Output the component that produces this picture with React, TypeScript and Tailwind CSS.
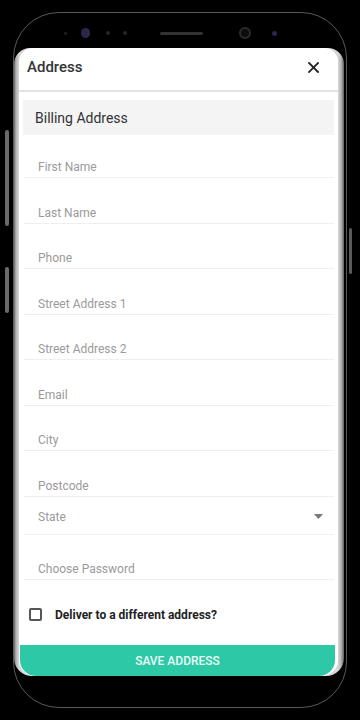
import React from "react";

const fields = [
  "Last Name",
  "Phone",
  "Street Address 1",
  "Street Address 2",
  "Email",
  "City",
  "Postcode",
];

export default function App() {
  return (
    <div
      className="relative w-[360px] h-[720px] bg-black overflow-hidden"
      style={{ fontFamily: "Roboto, 'Liberation Sans', sans-serif" }}
    >
      {/* side buttons */}
      <div className="absolute left-[5px] top-[130px] w-[4px] h-[96px] rounded-full bg-[#6a6a6a]" />
      <div className="absolute left-[5px] top-[267px] w-[4px] h-[46px] rounded-full bg-[#6a6a6a]" />
      <div className="absolute left-[349px] top-[228px] w-[3px] h-[46px] rounded-full bg-[#5a5a5a]" />

      {/* phone body */}
      <div className="ml-[13px] mt-[12px] w-[334px] h-[696px] rounded-[46px] border border-[#5a5a5a] bg-black flex flex-col">
        {/* sensors */}
        <div className="h-[35px] pt-[5px] flex items-center">
          <div className="ml-[50px] w-[3px] h-[3px] rounded-full bg-[#222]" />
          <div className="ml-[14px] w-[9px] h-[10px] rounded-full bg-[#2a2848]" />
          <div className="ml-[16px] w-[4px] h-[4px] rounded-full bg-[#262626]" />
          <div className="ml-[13px] w-[4px] h-[4px] rounded-full bg-[#262626]" />
          <div className="ml-[33px] w-[43px] h-[3px] rounded-full bg-[#333]" />
          <div className="ml-[36px] w-[12px] h-[12px] rounded-full border-2 border-[#2c2c2c] bg-[#0c0c0c]" />
          <div className="ml-[21px] w-[5px] h-[5px] rounded-full bg-[#2a2850]" />
        </div>

        {/* screen with curved glass edges */}
        <div className="h-[628px] w-[330px] rounded-t-[16px] rounded-b-[18px] bg-[linear-gradient(to_right,#6a6a6a_0px,#b0b0b0_2px,#d8d8d8_5px,#d8d8d8_calc(100%-6px),#b5b5b5_calc(100%-3px),#5e5e5e_100%)] pl-[5px] pr-[6px] flex">
          <div className="flex-1 bg-white rounded-t-[14px] rounded-b-[16px] overflow-hidden flex flex-col">
            {/* header */}
            <div className="h-[42px] flex items-center justify-between pl-[8px] pr-[19px] pb-[4px]">
              <span className="text-[15px] font-medium text-[#333] leading-none">Address</span>
              <svg width="11" height="11" viewBox="0 0 11 11">
                <path d="M1 1L10 10M10 1L1 10" stroke="#222" strokeWidth="1.8" strokeLinecap="square" />
              </svg>
            </div>
            <div className="h-[2px] bg-[#e3e3e3]" />

            {/* billing box */}
            <div className="mt-[8px] mx-[4px] h-[35px] bg-[#f4f4f4] flex items-center pl-[12px]">
              <span className="text-[14px] text-[#333] leading-none">Billing Address</span>
            </div>

            {/* fields */}
            <div className="ml-[5px] mr-[4px] flex flex-col">
              <div className="h-[43px] border-b border-[#efefef] flex items-end pl-[14px] pb-[2px]">
                <span className="text-[12px] leading-[16px] text-[#9a9a9a]">First Name</span>
              </div>
              {fields.map((f) => (
                <div
                  key={f}
                  className="h-[45.5px] border-b border-[#efefef] flex items-end pl-[14px] pb-[2px]"
                >
                  <span className="text-[12px] leading-[16px] text-[#9a9a9a]">{f}</span>
                </div>
              ))}
              <div className="h-[38px] border-b border-[#efefef] flex items-end justify-between pl-[14px] pr-[11px] pb-[9px]">
                <span className="text-[12px] leading-[16px] text-[#9a9a9a]">State</span>
                <svg width="9" height="5" viewBox="0 0 9 5" className="mb-[6px]">
                  <path d="M0 0H9L4.5 5Z" fill="#777" />
                </svg>
              </div>
              <div className="h-[45px] border-b border-[#efefef] flex items-end pl-[14px] pb-[2px]">
                <span className="text-[12px] leading-[16px] text-[#9a9a9a]">Choose Password</span>
              </div>
            </div>

            {/* checkbox */}
            <div className="mt-[22px] h-[26px] flex items-center pl-[10px]">
              <div className="w-[13px] h-[13px] rounded-[2px] border-2 border-[#555]" />
              <span className="ml-[13px] text-[12px] font-bold text-[#222] leading-none">
                Deliver to a different address?
              </span>
            </div>

            <div className="flex-1" />

            {/* button */}
            <div className="h-[31px] ml-[1px] mr-[3px] bg-[#2dc9a6] rounded-b-[16px] flex items-center justify-center">
              <span className="text-[12px] font-medium text-[#e8fbf6] leading-none">SAVE ADDRESS</span>
            </div>
          </div>
        </div>
      </div>
    </div>
  );
}
